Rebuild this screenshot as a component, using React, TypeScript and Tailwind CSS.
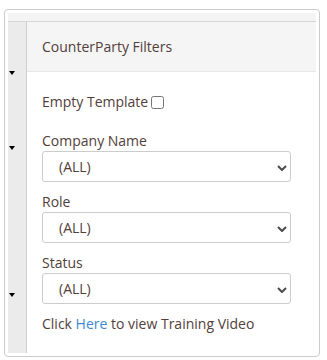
import React from "react";

const Chevron = () => (
  <svg width="10" height="6" viewBox="0 0 10 6" className="absolute right-[4px] top-[14px] pointer-events-none">
    <path d="M1 1 L5 5 L9 1" fill="none" stroke="#4a4a4a" strokeWidth="2" />
  </svg>
);

const Select = () => (
  <div className="relative w-[249px] h-[31px]">
    <div className="w-full h-full border border-[#cccccc] rounded-[3px] bg-white pl-[16px] flex items-center text-[14px] text-[#52403a]">
      (ALL)
    </div>
    <Chevron />
  </div>
);

export default function App() {
  return (
    <div
      className="pt-[9px] pl-[4px] text-[14px] text-[#52403a]"
      style={{ fontFamily: '"Open Sans", "Noto Sans", sans-serif' }}
    >
      <div className="w-[316px] h-[348px] border border-[#cccccc] rounded-[4px] p-[3px] flex flex-col">
        <div className="h-[9px] bg-[#f4f4f4] border-b border-[#d6d6d6] shrink-0" />
        <div className="flex flex-1">
          <div className="relative w-[19px] bg-[#ebebeb] border-r border-[#cfcfcf] shrink-0">
            <div className="absolute left-[1px] top-[49px] w-0 h-0 border-x-[3.5px] border-x-transparent border-t-[4px] border-t-black" />
            <div className="absolute left-[1px] top-[124px] w-0 h-0 border-x-[3.5px] border-x-transparent border-t-[4px] border-t-black" />
            <div className="absolute left-[1px] top-[271px] w-0 h-0 border-x-[3.5px] border-x-transparent border-t-[4px] border-t-black" />
          </div>
          <div className="flex-1 flex flex-col">
            <div className="h-[50px] bg-[#f5f5f5] border-b border-[#e6e6e6] flex items-center pl-[15px] leading-[20px]">
              CounterParty Filters
            </div>
            <div className="pl-[15px] pt-[20px] leading-[20px]">
              <div className="flex items-center h-[20px]">
                <span>Empty Template</span>
                <input type="checkbox" className="ml-[3px] w-[13px] h-[13px]" />
              </div>
              <div className="mt-[19px]">Company Name</div>
              <Select />
              <div className="mt-[10px]">Role</div>
              <Select />
              <div className="mt-[10px]">Status</div>
              <Select />
              <div className="mt-[10px]">
                Click <span className="text-[#3a8ad0]">Here</span> to view Training Video
              </div>
            </div>
          </div>
        </div>
      </div>
    </div>
  );
}
